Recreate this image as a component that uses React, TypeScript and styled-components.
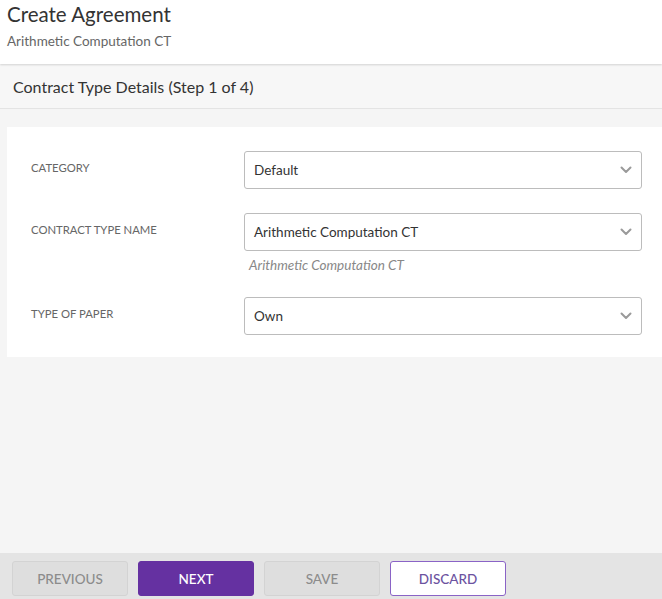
import React from "react";
import styled, { createGlobalStyle } from "styled-components";

const GlobalStyle = createGlobalStyle`
  html, body {
    margin: 0;
    padding: 0;
    height: 100%;
  }
  body {
    font-family: "Lato", "Liberation Sans", sans-serif;
    color: #333;
    background: #f5f5f5;
  }
  #root {
    height: 100%;
  }
`;

const fields = [
  { label: "CATEGORY", value: "Default" },
  { label: "CONTRACT TYPE NAME", value: "Arithmetic Computation CT", hint: "Arithmetic Computation CT" },
  { label: "TYPE OF PAPER", value: "Own" },
];

const Chevron = () => (
  <svg width="12" height="8" viewBox="0 0 12 8" fill="none">
    <path d="M1.5 1.5 L6 6 L10.5 1.5" stroke="#9a9a9a" strokeWidth="2" strokeLinecap="round" strokeLinejoin="round" />
  </svg>
);

export default function App() {
  return (
    <>
      <GlobalStyle />
      <Page>
        <Header>
          <Title>Create Agreement</Title>
          <Subtitle>Arithmetic Computation CT</Subtitle>
        </Header>
        <StepBar>Contract Type Details (Step 1 of 4)</StepBar>
        <Content>
          <Card>
            {fields.map((f) => (
              <Row key={f.label}>
                <Label>{f.label}</Label>
                <Field>
                  <Select>
                    <span>{f.value}</span>
                    <Chevron />
                  </Select>
                  {f.hint && <Hint>{f.hint}</Hint>}
                </Field>
              </Row>
            ))}
          </Card>
        </Content>
        <Footer>
          <Button variant="disabled">PREVIOUS</Button>
          <Button variant="primary">NEXT</Button>
          <Button variant="disabled">SAVE</Button>
          <Button variant="outline">DISCARD</Button>
        </Footer>
      </Page>
    </>
  );
}

const Page = styled.div`
  display: flex;
  flex-direction: column;
  min-height: 100vh;
`;

const Header = styled.header`
  height: 64px;
  box-sizing: border-box;
  padding: 2px 7px 0;
  background: #fff;
  box-shadow: 0 1px 2px rgba(0, 0, 0, 0.15);
  position: relative;
  z-index: 1;
`;

const Title = styled.h1`
  margin: 0;
  font-size: 20.5px;
  font-weight: 400;
  line-height: 25px;
  color: #333;
`;

const Subtitle = styled.div`
  margin-top: 6px;
  font-size: 13.5px;
  line-height: 16px;
  color: #666;
`;

const StepBar = styled.div`
  height: 44px;
  display: flex;
  align-items: center;
  padding-left: 13px;
  background: #f7f7f7;
  border-bottom: 1px solid #e4e4e4;
  font-size: 16px;
  color: #333;
`;

const Content = styled.main`
  flex: 1;
  padding: 18px 0 0 7px;
  background: #f5f5f5;
`;

const Card = styled.section`
  background: #fff;
  padding: 24px 20px 22px 24px;
  display: flex;
  flex-direction: column;
  gap: 24px;
`;

const Row = styled.div`
  display: grid;
  grid-template-columns: 213px 1fr;
  align-items: start;
`;

const Label = styled.div`
  padding-top: 10px;
  font-size: 11.3px;
  line-height: 14px;
  color: #666;
`;

const Field = styled.div`
  display: flex;
  flex-direction: column;
`;

const Select = styled.div`
  height: 38px;
  box-sizing: border-box;
  border: 1px solid #bcbcbc;
  border-radius: 3px;
  display: flex;
  align-items: center;
  justify-content: space-between;
  padding: 0 9px 0 9px;
  font-size: 13.5px;
  color: #333;
`;

const Hint = styled.div`
  margin-top: 7px;
  padding-left: 5px;
  font-size: 13.5px;
  line-height: 15px;
  font-style: italic;
  color: #888;
`;

const Footer = styled.footer`
  height: 46px;
  box-sizing: border-box;
  padding: 8px 12px 0;
  background: #e4e4e4;
  display: flex;
  gap: 10px;
`;

type Variant = "disabled" | "primary" | "outline";

const Button = styled.button<{ variant: Variant }>`
  width: 116px;
  height: 35px;
  border-radius: 3px;
  font-family: inherit;
  font-size: 13.5px;
  font-weight: 500;
  cursor: pointer;
  border: 1px solid
    ${(p) => (p.variant === "primary" ? "#6531a1" : p.variant === "outline" ? "#8a63c6" : "#d3d3d3")};
  background: ${(p) => (p.variant === "primary" ? "#6531a1" : p.variant === "outline" ? "#fff" : "#dedede")};
  color: ${(p) => (p.variant === "primary" ? "#fff" : p.variant === "outline" ? "#6c53a0" : "#8c8c8c")};
`;
